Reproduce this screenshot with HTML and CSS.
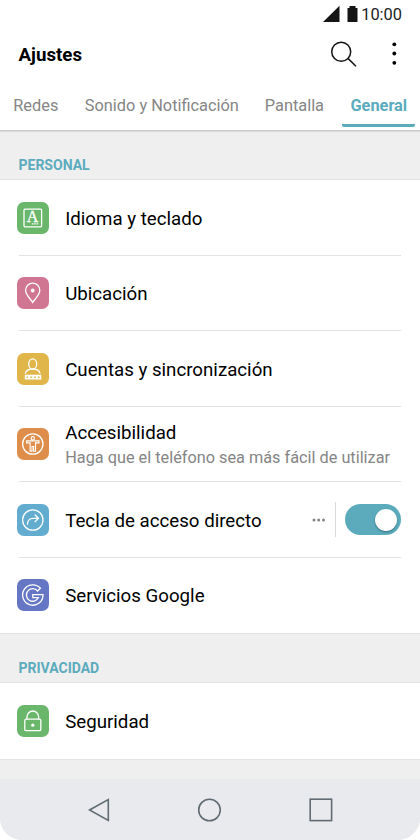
FILE: index.html
```html
<!DOCTYPE html>
<html lang="es">
<head>
<meta charset="utf-8">
<title>Ajustes</title>
<link rel="stylesheet" href="styles.css">
</head>
<body>
<div class="phone">
  <header class="header">
    <div class="status">
      <svg width="36" height="18" viewBox="0 0 36 18" fill="#151515"><path d="M0 17 16.500 .8V17zM24.500 3h2V1h6v2h2v14h-10z"/></svg>
      <span>10:00</span>
    </div>
    <div class="titlebar">
      <h1>Ajustes</h1>
      <svg class="search" width="28" height="28" viewBox="0 0 28 28" fill="none" stroke="#151515" stroke-width="1.500"><circle cx="11.200" cy="11.700" r="9.500"/><path d="M17.900 18.400 26 26.300"/></svg>
      <svg width="6" height="26" viewBox="0 0 6 26" fill="#000"><circle cx="3.300" cy="3.300" r="1.900"/><circle cx="3.300" cy="12.500" r="1.900"/><circle cx="3.300" cy="21.800" r="1.900"/></svg>
    </div>
    <nav class="tabs">
      <a class="tab redes">Redes</a>
      <a class="tab sonido">Sonido y Notificación</a>
      <a class="tab pantalla">Pantalla</a>
      <a class="tab active">General</a>
    </nav>
  </header>
  <main class="content">
    <h2 class="section">PERSONAL</h2>
    <ul class="list">
      <li class="row">
        <svg class="icon green" viewBox="0 0 32 32"><rect x="7" y="7.200" width="17.600" height="17.600" rx="1"/><text class="letter" x="15.600" y="20.300">A</text><path d="M14.800 21.800h7" stroke-dasharray="1.600 .8"/></svg>
        <span class="label">Idioma y teclado</span>
      </li>
      <li class="row">
        <svg class="icon pink" viewBox="0 0 32 32"><path d="M15.700 25.500C13.700 22 8.600 18 8.600 13.200a7.100 7.100 0 0 1 14.200 0C22.800 18 17.700 22 15.700 25.500z"/><circle class="solid" cx="15.700" cy="13.500" r="1.900"/></svg>
        <span class="label">Ubicación</span>
      </li>
      <li class="row">
        <svg class="icon yellow" viewBox="0 0 32 32"><ellipse cx="15.700" cy="11" rx="4" ry="5.200"/><path d="M8.200 20.600c.9-3 3.300-4.600 7.500-4.600s6.600 1.600 7.500 4.600"/><rect class="solid" x="7.800" y="21.800" width="16.500" height="4.800" rx=".6"/><path class="pins" d="M9.600 24.200h13.500"/></svg>
        <span class="label">Cuentas y sincronización</span>
      </li>
      <li class="row">
        <svg class="icon orange" viewBox="0 0 32 32"><circle cx="15.800" cy="16" r="10.200"/><g stroke-width="1.100"><circle cx="15.800" cy="10.300" r="1.700"/><path d="M9.600 12.900h12.400v2h-3.500v8.300h-1.900v-4.700h-1.600v4.700h-1.900v-8.300H9.600z"/></g></svg>
        <div class="texts">
          <span class="label">Accesibilidad</span>
          <span class="sub">Haga que el teléfono sea más fácil de utilizar</span>
        </div>
      </li>
      <li class="row">
        <svg class="icon blue" viewBox="0 0 32 32"><circle cx="15.800" cy="16" r="10.200"/><path d="M10.400 20.700c0-3.800 2.100-6.400 5.500-6.400h4.900M17.700 10.500l3.800 3.800-3.800 3.800"/></svg>
        <span class="label">Tecla de acceso directo</span>
        <svg class="dots" width="14" height="4" viewBox="0 0 14 4" fill="#858585"><circle cx="2" cy="2" r="1.500"/><circle cx="6.700" cy="2" r="1.500"/><circle cx="11.500" cy="2" r="1.500"/></svg>
        <span class="bar"></span>
        <span class="toggle"><span class="knob"></span></span>
      </li>
      <li class="row">
        <svg class="icon indigo" viewBox="0 0 32 32"><path d="M23.400 9.200A10.200 10.200 0 1 0 26 15.700H15.800V18.600H21.400A6.300 6.300 0 1 1 20.600 12z"/></svg>
        <span class="label">Servicios Google</span>
      </li>
    </ul>
    <h2 class="section">PRIVACIDAD</h2>
    <ul class="list">
      <li class="row">
        <svg class="icon green" viewBox="0 0 32 32"><rect x="7.800" y="14.200" width="16" height="11.500" rx="1.300"/><path d="M10 14.200V11.800a5.800 5.800 0 0 1 11.600 0v2.400"/><circle class="solid" cx="15.800" cy="20.200" r="1.600"/></svg>
        <span class="label">Seguridad</span>
      </li>
    </ul>
  </main>
  <footer class="navbar">
    <svg width="22" height="24" viewBox="0 0 22 24"><path d="M1.500 12 20.300 1.500v21z"/></svg>
    <svg width="24" height="24" viewBox="0 0 24 24"><circle cx="12.500" cy="12" r="10.800"/></svg>
    <svg width="24" height="24" viewBox="0 0 24 24"><rect x="1.200" y="1.200" width="21.400" height="21.400"/></svg>
  </footer>
</div>
</body>
</html>
```
FILE: styles.css
```css
* { box-sizing: border-box; }
body { margin: 0; background: #fff; font-family: Roboto, sans-serif; color: #000; }
h1, h2, ul { margin: 0; padding: 0; list-style: none; }
svg { display: block; flex: none; }
.phone { width: 420px; height: 840px; display: flex; flex-direction: column; border-radius: 0 0 22px 22px; overflow: hidden; background: #efefef; }
.header { height: 131px; flex: none; background: #fff; border-bottom: 1px solid #c9c9c9; box-shadow: 0 1px 1px #ddd; z-index: 1; }
.status { height: 28px; display: flex; align-items: center; justify-content: flex-end; gap: 2px; padding: 1px 18px 0 0; font-size: 16.400px; color: #222; }
.status svg { margin-bottom: 2px; }
.titlebar { height: 52px; display: flex; align-items: center; padding: 0 23px 0 18.500px; }
.titlebar h1 { flex: 1; padding-top: 2px; font-size: 18.700px; font-weight: 700; }
.search { margin-right: 33px; }
.tabs { height: 50px; display: flex; padding-left: 13.300px; }
.tab { height: 47px; line-height: 52px; font-size: 16.350px; color: #858585; white-space: nowrap; }
.redes { width: 71.500px; }
.sonido { width: 180px; }
.pantalla { width: 77.500px; }
.active { width: 73px; text-align: center; font-weight: 700; color: #5babbd; background: linear-gradient(#5babbd, #5babbd) 0 100% / 100% 3.500px no-repeat; border-radius: 2px; }
.content { flex: 1; min-height: 0; }
.section { height: 48px; padding: 17px 18.500px 0; line-height: 35px; font-size: 14px; font-weight: 700; color: #5babbd; }
.list { background: #fff; border-top: 1px solid #e2e2e2; border-bottom: 1px solid #e2e2e2; }
.row { height: 75.500px; display: flex; align-items: center; margin-right: 19px; padding-left: 16.700px; background: linear-gradient(#e2e2e2, #e2e2e2) 19px 100% / 100% 1px no-repeat; }
.row:last-child { background: none; }
.icon { width: 32px; height: 32px; border-radius: 7px; margin-right: 16.500px; fill: none; stroke: #fff; stroke-width: 1.300; }
.icon .solid { fill: #fff; stroke: none; }
.letter { font: 400 16px "Liberation Serif", serif; text-anchor: middle; fill: #fff; stroke: #fff; stroke-width: .3; }
.pins { stroke: #e0b64b; stroke-width: 1.500; stroke-dasharray: 1.500 2.300; }
.green { background: #6ab76b; }
.pink { background: #d07592; }
.yellow { background: #e0b64b; }
.orange { background: #de8d4b; }
.blue { background: #62acd0; }
.indigo { background: #6577c4; }
.label { font-size: 18.700px; line-height: 24px; padding-top: 2px; }
.texts { display: flex; flex-direction: column; padding-top: 2px; }
.sub { font-size: 16.300px; line-height: 26px; color: #858585; white-space: nowrap; }
.dots { margin-left: auto; margin-right: 9px; }
.bar { width: 1px; height: 35px; background: #d9d9d9; margin-right: 9px; }
.toggle { width: 56px; height: 31px; border-radius: 16px; background: #5babbd; display: flex; align-items: center; justify-content: flex-end; padding-right: 4.500px; }
.knob { width: 22px; height: 22px; border-radius: 50%; background: #fff; box-shadow: 0 1px 2px #356e7a; }
.navbar { height: 61px; flex: none; display: flex; align-items: center; justify-content: space-between; padding: 0 87.500px 0 88px; background: #e9eaee; }
.navbar svg { fill: none; stroke: #606b72; stroke-width: 1.600; }
```
